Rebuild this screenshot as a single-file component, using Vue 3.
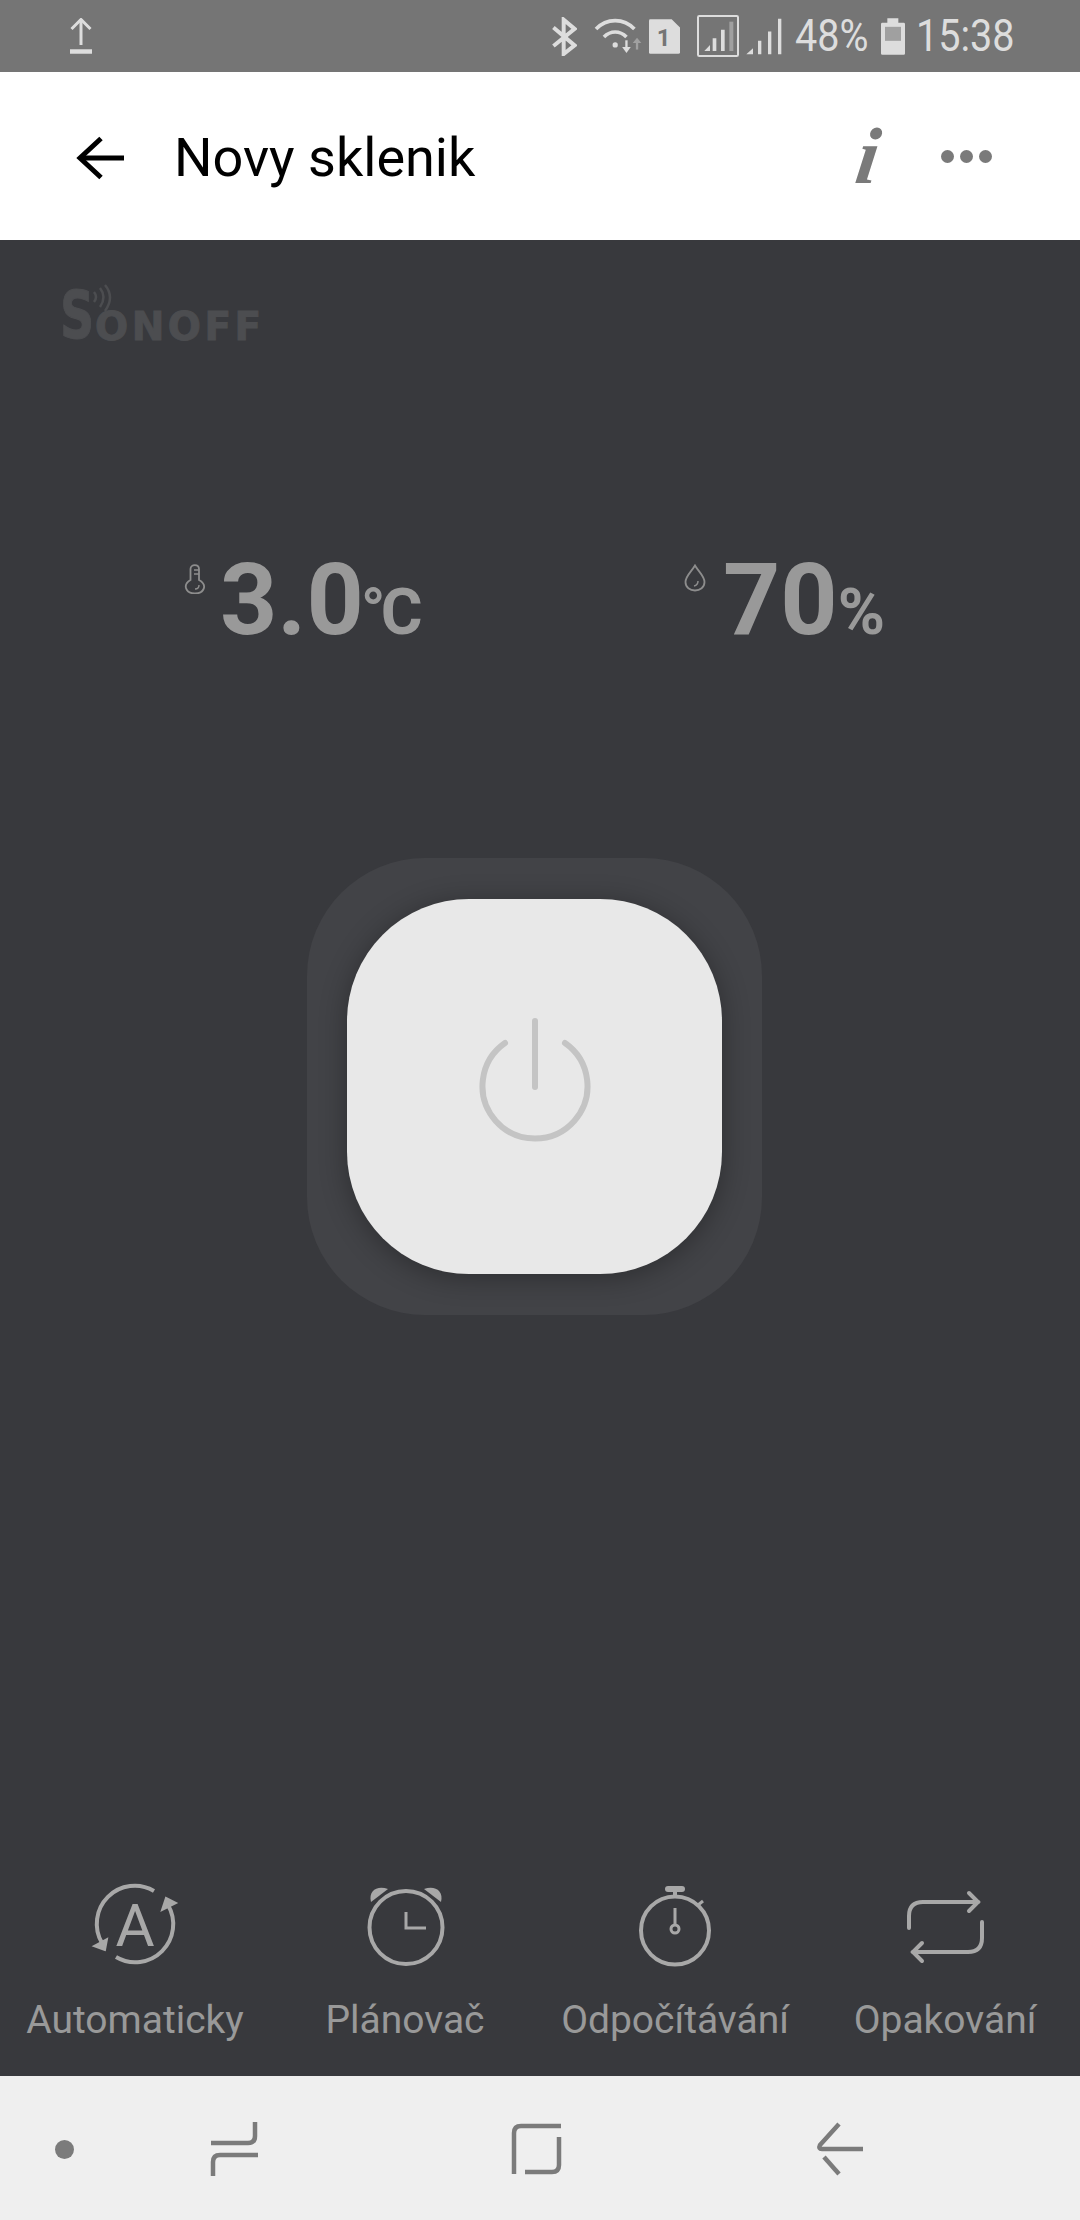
<script setup>
  const actions = [
    { key: 'auto', label: 'Automaticky' },
    { key: 'timer', label: 'Plánovač' },
    { key: 'countdown', label: 'Odpočítávání' },
    { key: 'repeat', label: 'Opakování' },
  ];
</script>

<template>
  <div class="screen">
    <div class="status-bar">
      <svg class="st-upload" viewBox="0 0 24 36" fill="none" stroke="#ddd">
        <path d="M12 1V27" stroke-width="3" />
        <path d="M2.5 11L12 1.5L21.5 11" stroke-width="3" />
        <path d="M1 33.5H23" stroke-width="4.5" />
      </svg>
      <div class="st-right">
        <svg class="st-bt" viewBox="92 48 78 118" fill="none" stroke="#ddd" stroke-width="12">
          <path d="M99 80L163 134L130 160V56L163 84L99 136" />
        </svg>
        <svg class="st-wifi" viewBox="220 48 148 114" fill="none" stroke="#ddd" stroke-width="11">
          <path d="M226 84C258 50 310 50 342 84" />
          <path d="M250 108C270 88 298 88 318 108" />
          <circle cx="284" cy="132" r="8" fill="#ddd" stroke="none" />
          <path d="M318 118V150" stroke-width="7" />
          <path d="M305 138L318 156L331 138Z" fill="#ddd" stroke="none" />
          <path d="M350 122V146" stroke="#a0a0a0" stroke-width="7" />
          <path d="M337 126L350 110L363 126Z" fill="#a0a0a0" stroke="none" />
        </svg>
        <svg class="st-sim" viewBox="387 52 93 104">
          <path d="M391 52H455L480 77V151Q480 156 475 156H391Q387 156 387 151V56Q387 52 391 52Z" fill="#ddd" />
          <text x="431" y="134" class="sim-num">1</text>
        </svg>
        <svg class="st-box" viewBox="528 42 126 126">
          <rect x="531" y="45" width="120" height="120" rx="4" fill="none" stroke="#ddd" stroke-width="6" />
          <path d="M550 150L567 132V150Z" fill="#ddd" />
          <path d="M575 112H586V150H575ZM600 86H611V150H600Z" fill="#ddd" />
          <path d="M625 62H637V150H625Z" fill="#a0a0a0" />
        </svg>
        <svg class="st-signal" viewBox="676 50 108 110" fill="#ddd">
          <path d="M677 158L697 140V158Z" />
          <path d="M712 118H722V158H712ZM742 90H752V158H742ZM772 52H782V158H772Z" />
        </svg>
        <span class="st-text st-pct">48%</span>
        <svg class="st-batt" viewBox="1078 52 72 110">
          <path d="M1097 52H1130V66H1146Q1150 66 1150 70V158Q1150 162 1146 162H1082Q1078 162 1078 158V70Q1078 66 1082 66H1097Z" fill="#ddd" />
          <rect x="1090" y="78" width="48" height="42" fill="#a0a0a0" />
        </svg>
        <span class="st-text st-time">15:38</span>
      </div>
    </div>

    <header class="app-bar">
      <svg class="back" viewBox="0 0 50 44" fill="none" stroke="#000" stroke-width="5">
        <path d="M48 22H5" />
        <path d="M25 2.5L4 22L25 41.5" />
      </svg>
      <h1 class="title">Novy sklenik</h1>
      <span class="info">i</span>
      <div class="more">
        <span></span>
        <span></span>
        <span></span>
      </div>
    </header>

    <main class="panel">
      <div class="logo">
        <span class="logo-s">S</span>
        <span class="logo-rest">ONOFF</span>
        <svg class="logo-waves" viewBox="0 0 20 28" fill="none" stroke="#4c4d50" stroke-width="2.5">
          <path d="M1 8Q5 13 1 18" />
          <path d="M7 4Q14 13 7 23" />
          <path d="M12 1Q22 13 12 27" />
        </svg>
      </div>

      <div class="stats">
        <div class="stat">
          <svg class="stat-icon" viewBox="0 0 22 30" fill="none" stroke="#8d8d8d" stroke-width="1.8">
            <path d="M6.5 16V5C6.5 -0.2 15 -0.2 15 5V16C24 21 20 29.5 11 29.5C2 29.5 -2 21 6.5 16Z" />
            <path d="M10 6H15M10 10H15" stroke-width="1.4" />
            <path d="M15 21C15 24 13 25 11 25" stroke-width="1.4" />
          </svg>
          <span class="value">3.0<span class="unit deg">°C</span></span>
        </div>
        <div class="stat">
          <svg class="stat-icon drop" viewBox="0 0 22 28" fill="none" stroke="#8d8d8d" stroke-width="1.8">
            <path d="M11 1.5C14 7 20.5 12 20.5 18C20.5 23.5 16 26.5 11 26.5C6 26.5 1.5 23.5 1.5 18C1.5 12 8 7 11 1.5Z" />
            <path d="M14 17C14 20 12.5 21.5 10 22" stroke-width="1.5" />
          </svg>
          <span class="value">70<span class="unit">%</span></span>
        </div>
      </div>

      <div class="switch-ring">
        <button class="switch">
          <svg class="power" viewBox="0 0 116 124" fill="none" stroke="#c4c4c4" stroke-width="6" stroke-linecap="round">
            <path d="M28 25A52.5 52.5 0 1 0 88 25" />
            <path d="M58 3V69" />
          </svg>
        </button>
      </div>

      <nav class="actions">
        <div v-for="item in actions" :key="item.key" class="action">
          <svg v-if="item.key === 'auto'" class="action-icon" viewBox="0 1 100 100" fill="none" stroke="#a8a8a8" stroke-width="4">
            <path d="M69 17A38 38 0 0 0 17 69" />
            <path d="M31 83A38 38 0 0 0 83 31" />
            <path d="M20 76L9 72L22 65Z" fill="#a8a8a8" stroke-width="2" />
            <path d="M81 24L91 29L77 36Z" fill="#a8a8a8" stroke-width="2" />
            <text x="50" y="72" class="auto-letter">A</text>
          </svg>
          <svg v-else-if="item.key === 'timer'" class="action-icon" viewBox="-1 -2 100 100" fill="none" stroke="#a8a8a8" stroke-width="4">
            <circle cx="50" cy="50.5" r="36.5" />
            <path d="M15 25C12 13 22 8 32 12Z" fill="#a8a8a8" stroke="none" />
            <path d="M85 25C88 13 78 8 68 12Z" fill="#a8a8a8" stroke="none" />
            <path d="M50 35V51H70" stroke-width="3" />
          </svg>
          <svg v-else-if="item.key === 'countdown'" class="action-icon" viewBox="0 -5 100 100" fill="none" stroke="#a8a8a8" stroke-width="4">
            <circle cx="50" cy="50.5" r="34" />
            <path d="M43 9H57" stroke-width="6" stroke-linecap="round" />
            <path d="M50 12V17" stroke-width="4" />
            <path d="M73 25L78 21" stroke-width="3" />
            <path d="M50 28V45" stroke-width="3" />
            <circle cx="50" cy="49" r="4" stroke-width="3" />
          </svg>
          <svg v-else class="action-icon" viewBox="0 -5 100 100" fill="none" stroke="#a8a8a8" stroke-width="4">
            <path d="M14 48V36Q14 22 28 22H83" stroke-linecap="round" />
            <path d="M74 13L83 22L74 31" stroke-linecap="round" />
            <path d="M87 42V58Q87 72 73 72H18" stroke-linecap="round" />
            <path d="M27 63L18 72L27 81" stroke-linecap="round" />
          </svg>
          <span class="action-label">{{ item.label }}</span>
        </div>
      </nav>
    </main>

    <div class="nav-bar">
      <span class="nav-dot"></span>
      <svg class="nav-recent" viewBox="0 0 56 60" fill="none" stroke="#7b7b7b">
        <path d="M47 3V17Q47 24 40 24H3" stroke-width="4.5" />
        <path d="M50 36H12Q5 36 5 43V57" stroke-width="4.5" />
      </svg>
      <svg class="nav-home" viewBox="0 0 56 60" fill="none" stroke="#7b7b7b">
        <path d="M52 7H12Q5 7 5 14V55" stroke-width="4.5" />
        <path d="M50 18V46Q50 53 43 53H16" stroke-width="4.5" />
      </svg>
      <svg class="nav-back" viewBox="0 0 56 60" fill="none" stroke="#7b7b7b" stroke-width="4.5">
        <path d="M26 5L7 26Q5 30 9 30H50" />
        <path d="M11 38L26 55" />
      </svg>
    </div>
  </div>
</template>

<style scoped>
  .screen {
    width: 1080px;
    height: 2220px;
    overflow: hidden;
    display: flex;
    flex-direction: column;
    font-family: Roboto, 'Liberation Sans', sans-serif;
  }

  .status-bar {
    height: 72px;
    flex: none;
    background: #757575;
    display: flex;
    align-items: center;
    padding-left: 69px;
  }

  .st-upload {
    width: 24px;
    height: 36px;
  }

  .st-right {
    display: flex;
    align-items: center;
    margin-left: auto;
    width: 535px;
    height: 72px;
    color: #ddd;
  }

  .st-bt {
    width: 26px;
    height: 39px;
    margin-left: 6px;
  }

  .st-wifi {
    width: 49px;
    height: 38px;
    margin-left: 17px;
  }

  .st-sim {
    width: 31px;
    height: 35px;
    margin-left: 6px;
  }

  .sim-num {
    font: 700 72px Roboto, sans-serif;
    fill: #757575;
    text-anchor: middle;
  }

  .st-box {
    width: 42px;
    height: 42px;
    margin-left: 17px;
  }

  .st-signal {
    width: 36px;
    height: 37px;
    margin-left: 7px;
  }

  .st-text {
    display: inline-block;
    font-size: 45px;
    line-height: 72px;
    transform-origin: left center;
    transform: scaleX(0.88);
    white-space: nowrap;
  }

  .st-pct {
    width: 72px;
    margin-left: 13px;
  }

  .st-batt {
    width: 24px;
    height: 37px;
    margin-left: 14px;
  }

  .st-time {
    width: 95px;
    margin-left: 11px;
  }

  .app-bar {
    height: 168px;
    flex: none;
    background: #fff;
    display: flex;
    align-items: center;
    padding-left: 76px;
  }

  .back {
    width: 50px;
    height: 44px;
    margin-top: 4px;
  }

  .title {
    margin: 3px 0 0 48px;
    font-size: 54px;
    font-weight: 400;
    color: #000;
    white-space: nowrap;
  }

  .info {
    margin-left: auto;
    font: italic 700 80px 'Liberation Serif', serif;
    line-height: 80px;
    color: #7a7a7a;
    transform: skewX(-8deg);
  }

  .more {
    display: flex;
    gap: 6px;
    margin: 0 88px 0 62px;
  }

  .more span {
    width: 13px;
    height: 13px;
    border-radius: 50%;
    background: #7a7a7a;
  }

  .panel {
    flex: 1;
    background: #38393d;
    display: flex;
    flex-direction: column;
    align-items: flex-start;
  }

  .logo {
    position: relative;
    display: flex;
    align-items: flex-end;
    height: 58px;
    margin: 47px 0 0 60px;
    color: #4c4d50;
    font-family: 'DejaVu Sans', sans-serif;
    font-weight: 700;
    -webkit-text-stroke: 1px #4c4d50;
  }

  .logo-s {
    display: inline-block;
    width: 35px;
    font-size: 66px;
    line-height: 58px;
    height: 58px;
    transform-origin: left center;
    transform: scaleX(0.72);
  }

  .logo-rest {
    font-size: 39px;
    line-height: 37px;
    letter-spacing: 3.5px;
    white-space: nowrap;
  }

  .logo-waves {
    position: absolute;
    left: 33px;
    top: -3px;
    width: 20px;
    height: 28px;
  }

  .stats {
    display: flex;
    margin: 219px 0 0 184px;
  }

  .stat {
    width: 500px;
    display: flex;
    align-items: flex-start;
  }

  .stat-icon {
    width: 22px;
    height: 30px;
    margin: 0 14px 0 0;
  }

  .drop {
    height: 28px;
    margin-right: 17px;
  }

  .value {
    font-size: 100px;
    line-height: 72px;
    font-weight: 700;
    color: #999;
    white-space: nowrap;
  }

  .unit {
    font-size: 64px;
    margin-left: 0;
  }

  .deg {
    font-size: 64px;
    letter-spacing: -5px;
    margin-left: -3px;
  }

  .switch-ring {
    width: 455px;
    height: 457px;
    margin: 209px 0 0 307px;
    background: #424347;
    border-radius: 118px;
    display: flex;
    align-items: center;
    justify-content: center;
  }

  .switch {
    width: 375px;
    height: 375px;
    padding: 0;
    border: 0;
    background: #e8e8e8;
    border-radius: 122px;
    box-shadow: 0 4px 28px rgba(0, 0, 0, 0.32);
    display: flex;
    align-items: center;
    justify-content: center;
  }

  .power {
    width: 116px;
    height: 124px;
    margin-bottom: 14px;
  }

  .actions {
    width: 1080px;
    margin-top: auto;
    padding-bottom: 33px;
    display: grid;
    grid-template-columns: repeat(4, 270px);
  }

  .action {
    display: flex;
    flex-direction: column;
    align-items: center;
  }

  .action-icon {
    width: 100px;
    height: 100px;
  }

  .auto-letter {
    font: 400 60px Roboto, sans-serif;
    fill: #a8a8a8;
    stroke: none;
    text-anchor: middle;
  }

  .action-label {
    margin-top: 22px;
    font-size: 39px;
    line-height: 46px;
    color: #999;
    white-space: nowrap;
  }

  .nav-bar {
    height: 144px;
    flex: none;
    background: #efefef;
    display: flex;
    align-items: center;
    padding: 2px 0 0 55px;
    box-sizing: border-box;
  }

  .nav-dot {
    width: 19px;
    height: 19px;
    border-radius: 50%;
    background: #7b7b7b;
  }

  .nav-recent,
  .nav-home,
  .nav-back {
    width: 56px;
    height: 60px;
  }

  .nav-recent {
    margin-left: 134px;
  }

  .nav-home {
    margin-left: 245px;
  }

  .nav-back {
    margin-left: 248px;
  }
</style>

<style>
  body {
    margin: 0;
    background: #38393d;
  }
</style>
